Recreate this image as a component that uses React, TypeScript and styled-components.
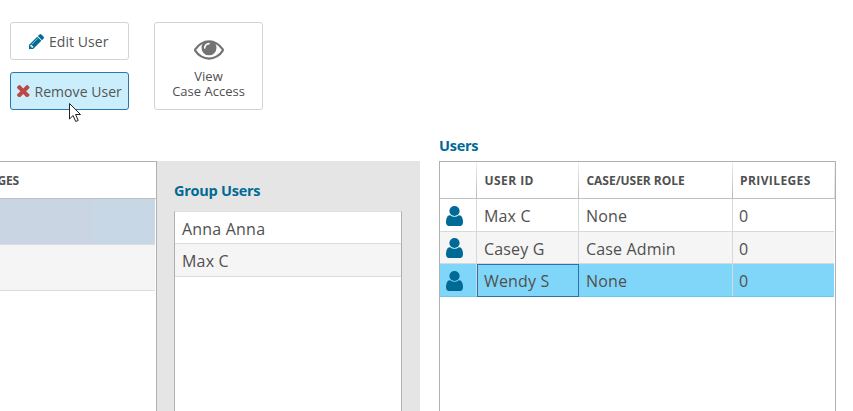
import React from "react";
import styled, { createGlobalStyle } from "styled-components";

const GlobalStyle = createGlobalStyle`
  * { box-sizing: border-box; }
  body {
    margin: 0;
    background: #fff;
    color: #505050;
    font-family: "Open Sans", "Noto Sans", sans-serif;
    overflow: hidden;
  }
`;

const Page = styled.div`
  width: 853px;
  height: 411px;
  display: flex;
  flex-direction: column;
  overflow: hidden;
  position: relative;
`;

const Toolbar = styled.div`
  display: flex;
  gap: 25px;
  height: 161px;
  padding: 22px 0 0 10px;
  flex: none;
`;

const ButtonStack = styled.div`
  display: flex;
  flex-direction: column;
  gap: 12px;
`;

const ActionButton = styled.button<{ $active?: boolean; $inset: number }>`
  width: 119px;
  height: 38px;
  display: flex;
  align-items: center;
  gap: 5px;
  padding: 0 0 0 ${(p) => p.$inset}px;
  border: 1px solid ${(p) => (p.$active ? "#2f74ad" : "#d3d3d3")};
  border-radius: 3px;
  background: ${(p) => (p.$active ? "#caeefb" : "#fff")};
  color: #555;
  font: 14px "Open Sans", sans-serif;
  letter-spacing: 0.05px;
  white-space: nowrap;
`;

const ViewButton = styled.button`
  width: 109px;
  height: 88px;
  display: flex;
  flex-direction: column;
  align-items: center;
  padding: 17px 0 0;
  border: 1px solid #d3d3d3;
  border-radius: 3px;
  background: #fff;
  color: #505050;
  font: 13px/15px "Open Sans", sans-serif;
  letter-spacing: 0;
`;

const ViewLabel = styled.span`
  margin-top: 9px;
`;

const Content = styled.div`
  display: flex;
  flex: 1;
  min-height: 0;
`;

const PrivilegesTable = styled.div`
  width: 157px;
  border-top: 1px solid #b0b0b0;
  border-right: 1px solid #b0b0b0;
  background: #fff;
  overflow: hidden;
`;

const PrivilegesHead = styled.div`
  height: 37px;
  display: flex;
  align-items: center;
  justify-content: flex-end;
  padding: 1px 137px 0 0;
  border-bottom: 1px solid #c0c0c0;
  font-size: 12px;
  font-weight: 700;
  letter-spacing: -0.2px;
  white-space: nowrap;
`;

const PrivilegesRow = styled.div<{ $selected?: boolean }>`
  height: 46px;
  margin-right: 1px;
  border-bottom: 1px solid #dcdcdc;
  background: ${(p) => (p.$selected ? "linear-gradient(90deg, #cad5e4 60%, #c7d7e6 60%)" : "#f5f5f5")};
`;

const GroupPanel = styled.section`
  width: 263px;
  display: flex;
  flex-direction: column;
  padding: 20px 18px 0 17px;
  background: #e5e5e5;
`;

const Title = styled.h2`
  margin: 0;
  height: 20px;
  color: #006a96;
  font-size: 14.5px;
  line-height: 20px;
  font-weight: 700;
  letter-spacing: -0.25px;
  white-space: nowrap;
`;

const GroupList = styled.div`
  flex: 1;
  margin-top: 10px;
  border: 1px solid #b0b0b0;
  border-top-color: #e0e0e0;
  border-bottom: 0;
  background: #fff;
`;

const GroupRow = styled.div<{ $shaded?: boolean }>`
  height: ${(p) => (p.$shaded ? 33 : 32)}px;
  display: flex;
  align-items: center;
  padding: 2px 0 0 7px;
  border-bottom: 1px solid #dcdcdc;
  background: ${(p) => (p.$shaded ? "#f5f5f5" : "#fff")};
  font-size: 16px;
  letter-spacing: 0.2px;
`;

const UsersPanel = styled.section`
  width: 397px;
  margin: -25px 0 0 19px;
  display: flex;
  flex-direction: column;
`;

const UsersTable = styled.div`
  flex: 1;
  margin-top: 5px;
  border: 1px solid #b0b0b0;
  border-bottom: 0;
`;

const HeadRow = styled.div`
  display: grid;
  grid-template-columns: 37px 102px 154px 1fr;
  height: 37px;
  border-bottom: 1px solid #c0c0c0;
`;

const HeadCell = styled.div<{ $spacing?: number }>`
  display: flex;
  align-items: center;
  padding: 1px 0 0 7.5px;
  border-right: 1px solid;
  border-image: linear-gradient(#f2f2f2, #b8b8b8) 1;
  font-size: 12px;
  font-weight: 700;
  letter-spacing: ${(p) => p.$spacing ?? 0}px;
  white-space: nowrap;
  &:last-child { padding-left: 7px; border-image: linear-gradient(#f7f7f7, #dcdcdc) 1; }
`;

const UserRow = styled.div<{ $tone: "plain" | "shaded" | "selected" }>`
  display: grid;
  grid-template-columns: 37px 102px 154px 1fr;
  height: ${(p) => (p.$tone === "shaded" ? 32 : 33)}px;
  margin-right: 1px;
  border-bottom: 1px solid ${(p) => (p.$tone === "selected" ? "#6fc7e9" : "#d8d8d8")};
  background: ${(p) => ({ plain: "#fff", shaded: "#f5f5f5", selected: "#80d6f8" })[p.$tone]};
`;

const UserCell = styled.div<{ $focused?: boolean }>`
  display: flex;
  align-items: center;
  padding: 2px 0 0 7px;
  border-right: 1px solid #d8d8d8;
  font-size: 16px;
  letter-spacing: 0.15px;
  white-space: nowrap;
  ${(p) =>
    p.$focused &&
    `margin-bottom: -1px;
     padding: 1px 0 0 6px;
     border: 1px solid #2f6fae;`}
  &:last-child { border-right: 0; padding-left: 6px; }
`;

const IconCell = styled(UserCell)`
  padding: 1px 0 0 6px;
`;

const Pointer = styled.svg`
  position: absolute;
  left: 68px;
  top: 102px;
`;

const Icon = styled.svg`
  display: block;
  flex: none;
  fill: currentColor;
`;
const PencilSvg = styled(Icon)`color: #006a96;`;
const CrossSvg = styled(Icon)`color: #bd4747;`;
const EyeSvg = styled(Icon)`color: #737373;`;
const UserSvg = styled(Icon)`color: #006a96;`;

const PencilIcon = () => (
  <PencilSvg width="15" height="15" viewBox="128 149 1515 1515">
    <path d="M491 1536l91-91-235-235-91 91v107h128v128h107zm523-928q0-22-22-22-10 0-17 7l-542 542q-7 7-7 17 0 22 22 22 10 0 17-7l542-542q7-7 7-17zm-54-192l416 416-832 832h-416v-416zm683 96q0 53-37 90l-166 166-416-416 166-165q36-38 90-38 53 0 91 38l235 234q37 39 37 91z" />
  </PencilSvg>
);

const CrossIcon = () => (
  <CrossSvg width="12.5" height="12.5" viewBox="302 366 1188 1188">
    <path d="M1490 1322q0 40-28 68l-136 136q-28 28-68 28t-68-28l-294-294-294 294q-28 28-68 28t-68-28l-136-136q-28-28-28-68t28-68l294-294-294-294q-28-28-28-68t28-68l136-136q28-28 68-28t68 28l294 294 294-294q28-28 68-28t68 28l136 136q28 28 28 68t-28 68l-294 294 294 294q28 28 28 68z" />
  </CrossSvg>
);

const EyeIcon = () => (
  <EyeSvg width="30" height="20" viewBox="0 384 1792 1152">
    <path d="M1664 960q-152-236-381-353 61 104 61 225 0 185-131.5 316.5t-316.5 131.5-316.5-131.5-131.5-316.5q0-121 61-225-229 117-381 353 133 205 333.5 326.5t434.5 121.5 434.5-121.5 333.5-326.5zm-720-384q0-20-14-34t-34-14q-125 0-214.5 89.5t-89.5 214.5q0 20 14 34t34 14 34-14 14-34q0-86 61-147t147-61q20 0 34-14t14-34zm848 384q0 34-20 69-140 230-376.5 368.5t-499.5 138.5-499.5-139-376.5-368q-20-35-20-69t20-69q140-229 376.5-368t499.5-139 499.5 139 376.5 368q20 35 20 69z" />
  </EyeSvg>
);

const UserIcon = () => (
  <UserSvg width="17" height="20" viewBox="256 128 1280 1536" preserveAspectRatio="none">
    <path d="M1536 1399q0 109-62.5 187t-150.5 78h-854q-88 0-150.5-78t-62.5-187q0-85 8.5-160.5t31.5-152 58.5-131 94-89 134.5-34.5q131 128 313 128t313-128q76 0 134.5 34.5t94 89 58.5 131 31.5 152 8.5 160.5z" />
    <circle cx="896" cy="512" r="384" />
  </UserSvg>
);

const users = [
  { id: "Max C", role: "None", tone: "plain" },
  { id: "Casey G", role: "Case Admin", tone: "shaded" },
  { id: "Wendy S", role: "None", tone: "selected" },
] as const;

export default function App() {
  return (
    <Page>
      <GlobalStyle />
      <Toolbar>
        <ButtonStack>
          <ActionButton $inset={18}>
            <PencilIcon />
            Edit User
          </ActionButton>
          <ActionButton $active $inset={6}>
            <CrossIcon />
            Remove User
          </ActionButton>
        </ButtonStack>
        <ViewButton>
          <EyeIcon />
          <ViewLabel>View<br />Case Access</ViewLabel>
        </ViewButton>
      </Toolbar>
      <Content>
        <PrivilegesTable>
          <PrivilegesHead>PRIVILEGES</PrivilegesHead>
          <PrivilegesRow $selected />
          <PrivilegesRow />
        </PrivilegesTable>
        <GroupPanel>
          <Title>Group Users</Title>
          <GroupList>
            <GroupRow>Anna Anna</GroupRow>
            <GroupRow $shaded>Max C</GroupRow>
          </GroupList>
        </GroupPanel>
        <UsersPanel>
          <Title>Users</Title>
          <UsersTable>
            <HeadRow>
              <HeadCell />
              <HeadCell $spacing={0.45}>USER ID</HeadCell>
              <HeadCell $spacing={-0.03}>CASE/USER ROLE</HeadCell>
              <HeadCell $spacing={0.4}>PRIVILEGES</HeadCell>
            </HeadRow>
            {users.map((user) => (
              <UserRow key={user.id} $tone={user.tone}>
                <IconCell><UserIcon /></IconCell>
                <UserCell $focused={user.tone === "selected"}>{user.id}</UserCell>
                <UserCell>{user.role}</UserCell>
                <UserCell>0</UserCell>
              </UserRow>
            ))}
          </UsersTable>
        </UsersPanel>
      </Content>
      <Pointer width="14" height="21" viewBox="0 0 14 21">
        <path d="M1.5 1.5v15.5l3.600-3.500 2.600 6 2.500-1.100-2.600-5.900h4.900z" fill="#fff" stroke="#222" strokeWidth="1" />
      </Pointer>
    </Page>
  );
}
